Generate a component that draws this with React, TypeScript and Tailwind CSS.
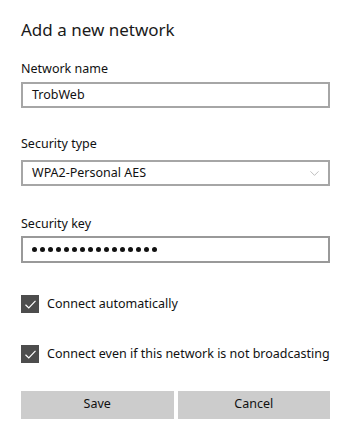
import { ChevronDown } from "lucide-react";

function Check() {
  return (
    <span className="w-[18px] h-[18px] bg-[#4d4d4d] flex items-center justify-center shrink-0">
      <svg width="13" height="13" viewBox="0 0 13 13" fill="none">
        <path d="M1.5 6.8 L4.8 10 L11.5 2.8" stroke="white" strokeWidth="1.2" />
      </svg>
    </span>
  );
}

const dots = Array.from({ length: 16 });

export default function App() {
  return (
    <div
      className="w-[349px] h-[435px] bg-white text-[#111] pl-[21px] pr-[19px] pt-[18px]"
      style={{ fontFamily: '"Noto Sans", sans-serif' }}
    >
      <h1 className="text-[17px] leading-[24px] text-[#1a1a1a]">Add a new network</h1>

      <label className="block text-[12.5px] leading-[18px] mt-[18px]">Network name</label>
      <div className="mt-[4px] h-[26px] border-2 border-[#a6a6a6] flex items-center px-[9px] text-[12.5px]">
        TrobWeb
      </div>

      <label className="block text-[12.5px] leading-[18px] mt-[27px]">Security type</label>
      <div className="mt-[7px] h-[26px] border-2 border-[#a6a6a6] flex items-center justify-between pl-[9px] pr-[6px] text-[12.5px]">
        <span>WPA2-Personal AES</span>
        <ChevronDown className="w-[15px] h-[15px] text-[#999]" strokeWidth={1} />
      </div>

      <label className="block text-[12.5px] leading-[18px] mt-[29px]">Security key</label>
      <div className="mt-[3px] h-[27px] border-2 border-[#999999] flex items-center gap-[3px] px-[9px]">
        {dots.map((_, i) => (
          <span key={i} className="w-[5px] h-[5px] rounded-full bg-[#111]" />
        ))}
      </div>

      <div className="flex items-center gap-[8px] mt-[32px] text-[12.5px]">
        <Check />
        <span>Connect automatically</span>
      </div>
      <div className="flex items-center gap-[8px] mt-[31px] text-[12.5px]">
        <Check />
        <span>Connect even if this network is not broadcasting</span>
      </div>

      <div className="flex gap-[4px] mt-[27px] text-[12.5px]">
        <button className="flex-1 h-[28px] bg-[#cccccc]">Save</button>
        <button className="flex-1 h-[28px] bg-[#cccccc]">Cancel</button>
      </div>
    </div>
  );
}
